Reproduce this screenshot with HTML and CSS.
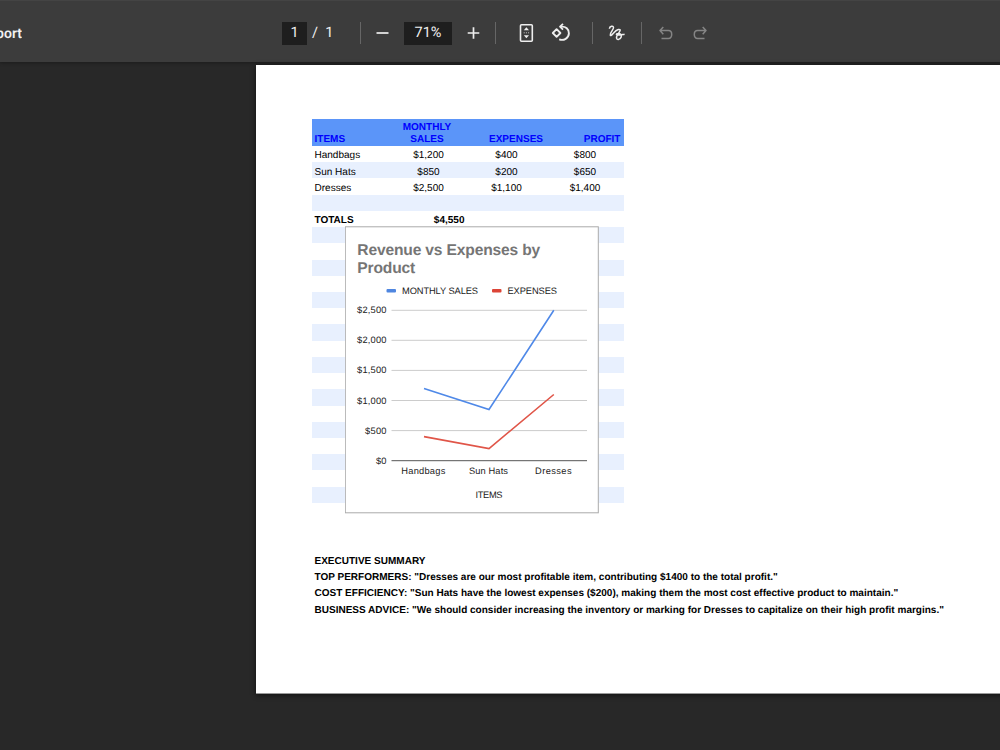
FILE: index.html
```
<!DOCTYPE html>
<html lang="en">

<head>
  <meta charset="utf-8">
  <title>Report</title>
  <link rel="stylesheet" href="styles.css">
</head>

<body>
  <header class="toolbar">
    <div class="doc-title"><span>port</span></div>
    <div class="controls">
      <span class="field page-num">1</span>
      <span class="page-total">/&nbsp; 1</span>
      <span class="divider first"></span>
      <svg class="icon" width="20" height="20" viewBox="0 0 20 20"><path d="M4.500 10h12" stroke-width="1.7" /></svg>
      <span class="field zoom-level">71%</span>
      <svg class="icon plus" width="20" height="20" viewBox="0 0 20 20"><path d="M4.700 10h11.600M10.500 4.200v11.600" stroke-width="1.7" /></svg>
      <span class="divider"></span>
      <svg class="icon fit" width="20" height="20" viewBox="0 0 20 20">
        <rect x="4.500" y="1.800" width="11.800" height="16.400" rx="1" stroke-width="1.6" />
        <path class="solid" d="M10.400 4.300L13 7.300H7.800zM10.400 15.200L7.800 12.200H13z" />
        <path d="M7.700 9.800h1M9.900 9.800h1M12.100 9.800h1" stroke-width="0.8" />
      </svg>
      <svg class="icon rotate" width="20" height="20" viewBox="0 0 20 20">
        <path d="M5.600 6.200L9.400 10L5.600 13.800L1.800 10z" stroke-width="1.9" />
        <path d="M9.800 3.700C14.800 3.100 18.100 6.300 17.900 10.500C17.600 15.200 12.800 18 8.200 16.400" stroke-width="1.9" />
        <path d="M12 0.900L9 3.700L12 6.600" stroke-width="1.8" />
      </svg>
      <span class="divider second"></span>
      <svg class="icon draw" width="20" height="20" viewBox="0 0 20 20">
        <path d="M2.400 5.800C2.600 3 6.300 2.200 6.500 4.600C6.600 6.800 2.800 9.400 3.300 12C4 14.800 7.200 7.200 11.400 6.400C14.800 6.200 12.600 8.800 10.600 11.600C8.600 14.800 9.600 16.800 11.600 16.400C13.800 15.800 15.200 13.200 13.800 11.400C12.400 10 9.400 10.400 9.400 11.600C9.800 12.800 14 11.800 17.600 11.200" stroke-width="1.5" />
      </svg>
      <span class="divider third"></span>
      <svg class="icon undo" width="20" height="20" viewBox="0 0 20 20">
        <path d="M7.300 4L4 7.600L7.300 11.200M4 7.600H12.400C16.800 7.600 16.800 15.400 12.400 15.400H5.500" stroke-width="1.5" />
      </svg>
      <svg class="icon redo" width="20" height="20" viewBox="0 0 20 20">
        <path d="M12.700 4L16 7.600L12.700 11.200M16 7.600H7.600C3.200 7.600 3.200 15.400 7.600 15.400H14.500" stroke-width="1.5" />
      </svg>
    </div>
  </header>

  <main class="page">
    <section class="sheet">
      <div class="row head">
        <span>ITEMS</span><span class="center">MONTHLY<br>SALES</span><span class="right expenses">EXPENSES</span><span class="right profit">PROFIT</span>
      </div>
      <div class="row"><span>Handbags</span><span class="num">$1,200</span><span class="num">$400</span><span class="num">$800</span></div>
      <div class="row"><span>Sun Hats</span><span class="num">$850</span><span class="num">$200</span><span class="num">$650</span></div>
      <div class="row"><span>Dresses</span><span class="num">$2,500</span><span class="num">$1,100</span><span class="num">$1,400</span></div>
      <div class="row"></div>
      <div class="row totals"><span>TOTALS</span><span class="right">$4,550</span></div>
      <div class="row"></div>
      <div class="row"></div>
      <div class="row"></div>
      <div class="row"></div>
      <div class="row"></div>
      <div class="row"></div>
      <div class="row"></div>
      <div class="row"></div>
      <div class="row"></div>
      <div class="row"></div>
      <div class="row"></div>
      <div class="row"></div>
      <div class="row"></div>
      <div class="row"></div>
      <div class="row"></div>
      <div class="row"></div>
      <div class="row"></div>

      <!-- chart floats over the cells -->
      <div class="chart">
        <svg width="255" height="288" viewBox="0 0 255 288">
          <rect class="frame" x="0.3" y="0.8" width="253" height="286" />
          <g class="chart-title">
            <text x="12.3" y="28.5" textLength="183">Revenue vs Expenses by</text>
            <text x="12.3" y="47" textLength="58">Product</text>
          </g>
          <rect x="41.5" y="63" width="9.5" height="3.5" rx="1" fill="#4f86e0" />
          <text x="57" y="67.5" textLength="76">MONTHLY SALES</text>
          <rect x="147" y="63" width="9.5" height="3.5" rx="1" fill="#dc4437" />
          <text x="162.5" y="67.5" textLength="49.5">EXPENSES</text>

          <path class="grid" d="M46.5 84.3H242M46.5 114.3H242M46.5 144.4H242M46.5 174.5H242M46.5 204.6H242" />
          <path class="axis" d="M46.5 234.7H242" />
          <g text-anchor="end">
            <text x="41.5" y="87.3" textLength="29.5">$2,500</text>
            <text x="41.5" y="117.3" textLength="29.5">$2,000</text>
            <text x="41.5" y="147.4" textLength="29.5">$1,500</text>
            <text x="41.5" y="177.5" textLength="29.5">$1,000</text>
            <text x="41.5" y="207.6" textLength="21.5">$500</text>
            <text x="41.5" y="237.9" textLength="10.5">$0</text>
          </g>
          <g text-anchor="middle">
            <text x="78.3" y="247.8" textLength="44">Handbags</text>
            <text x="143.5" y="247.8" textLength="39">Sun Hats</text>
            <text x="208.3" y="247.8" textLength="36.5">Dresses</text>
            <text x="144" y="272.4" textLength="27">ITEMS</text>
          </g>
          <path class="line" d="M79 162.5L144 183.5L208.8 84.3" stroke="#4f89e8" />
          <path class="line" d="M79 210.6L144 222.6L208.8 168.5" stroke="#e05548" />
        </svg>
      </div>
    </section>

    <section class="summary">
      <p>EXECUTIVE SUMMARY</p>
      <p>TOP PERFORMERS: "Dresses are our most profitable item, contributing $1400 to the total profit."</p>
      <p>COST EFFICIENCY: "Sun Hats have the lowest expenses ($200), making them the most cost effective product to maintain."</p>
      <p>BUSINESS ADVICE: "We should consider increasing the inventory or marking for Dresses to capitalize on their high profit margins."</p>
    </section>
  </main>
</body>

</html>
```

FILE: styles.css
```
* {
  box-sizing: border-box;
}

body {
  margin: 0;
  height: 750px;
  overflow: hidden;
  background: #282828;
  font-family: "Liberation Sans", Arial, sans-serif;
  text-rendering: geometricPrecision;
}

.toolbar {
  display: flex;
  height: 62px;
  padding-top: 3px;
  align-items: center;
  background: #3c3c3c;
  border-top: 1px solid #444;
  box-shadow: 0 1px 3px #1c1c1c;
  color: #f1f1f1;
  font-family: Roboto, sans-serif;
  font-size: 14.5px;
}

.doc-title {
  display: flex;
  justify-content: flex-end;
  width: 22px;
  margin-right: 260px;
  padding-top: 1px;
  overflow: hidden;
  font-size: 14px;
  font-weight: 600;
}

.controls {
  display: flex;
  align-items: center;
}

.field {
  height: 23px;
  line-height: 22px;
  text-align: center;
  background: #1e1e1e;
}

.page-num {
  width: 25px;
}

.page-total {
  width: 53px;
  height: 23px;
  padding-left: 5px;
  line-height: 22px;
}

.divider {
  width: 1px;
  height: 22px;
  background: #666;
}

.first {
  margin-right: 11px;
}

.zoom-level {
  width: 48px;
  margin-left: 12px;
}

.icon {
  fill: none;
  stroke: #eee;
  stroke-linejoin: round;
}

.icon .solid {
  fill: #eee;
  stroke: none;
}

.plus {
  margin: 0 12px 0 11px;
}

.fit {
  margin-left: 20px;
}

.rotate {
  margin: 0 21px 0 15px;
}

.draw {
  margin: 0 14px;
}

.undo {
  margin: 0 14px;
}

.undo,
.redo {
  stroke: #858585;
}

.page {
  width: 760px;
  height: 629px;
  margin: 3px 0 0 256px;
  padding: 54px 0 0 56px;
  background: #fff;
  border-bottom: 1px solid #999;
  box-shadow: 0 1px 5px #111;
  color: #000;
}

.sheet {
  position: relative;
  width: 312px;
  font-size: 10.03px;
}

.row {
  display: grid;
  grid-template-columns: 77px 78px 78px 79px;
  height: 16.22px;
  padding-top: 3.3px;
  line-height: 14px;
}

.row:nth-child(odd) {
  background: #e8f0fe;
}

.row span {
  padding: 0 3px 0 2.5px;
}

.row .num {
  padding: 0 0 0 1px;
  text-align: center;
}

.row .center {
  padding: 0 2px 0 0;
  text-align: center;
}

.row .right {
  padding-right: 2.5px;
  text-align: right;
}

.row.head {
  height: 27px;
  padding: 3px 0 1px;
  align-items: end;
  background: #5b95f9;
  color: #00f;
  font-weight: bold;
  line-height: 11.3px;
}

.row .expenses {
  padding-right: 2px;
}

.row .profit {
  padding-right: 3.5px;
}

.totals {
  font-weight: bold;
}

.chart {
  position: absolute;
  left: 33px;
  top: 107px;
  font-size: 9.3px;
}

.chart svg {
  display: block;
}

.chart text {
  fill: #222;
}

.frame {
  fill: #fff;
  stroke: #aaa;
}

.chart .chart-title text {
  font-size: 15.6px;
  font-weight: bold;
  fill: #757575;
}

.grid {
  stroke: #ccc;
}

.axis {
  stroke: #555;
}

.line {
  fill: none;
  stroke-width: 1.6;
}

.summary {
  margin-top: 51px;
  font-size: 10.03px;
  font-weight: bold;
  white-space: nowrap;
}

.summary p {
  margin: 0;
  padding-left: 2.5px;
  line-height: 16.3px;
}
```
